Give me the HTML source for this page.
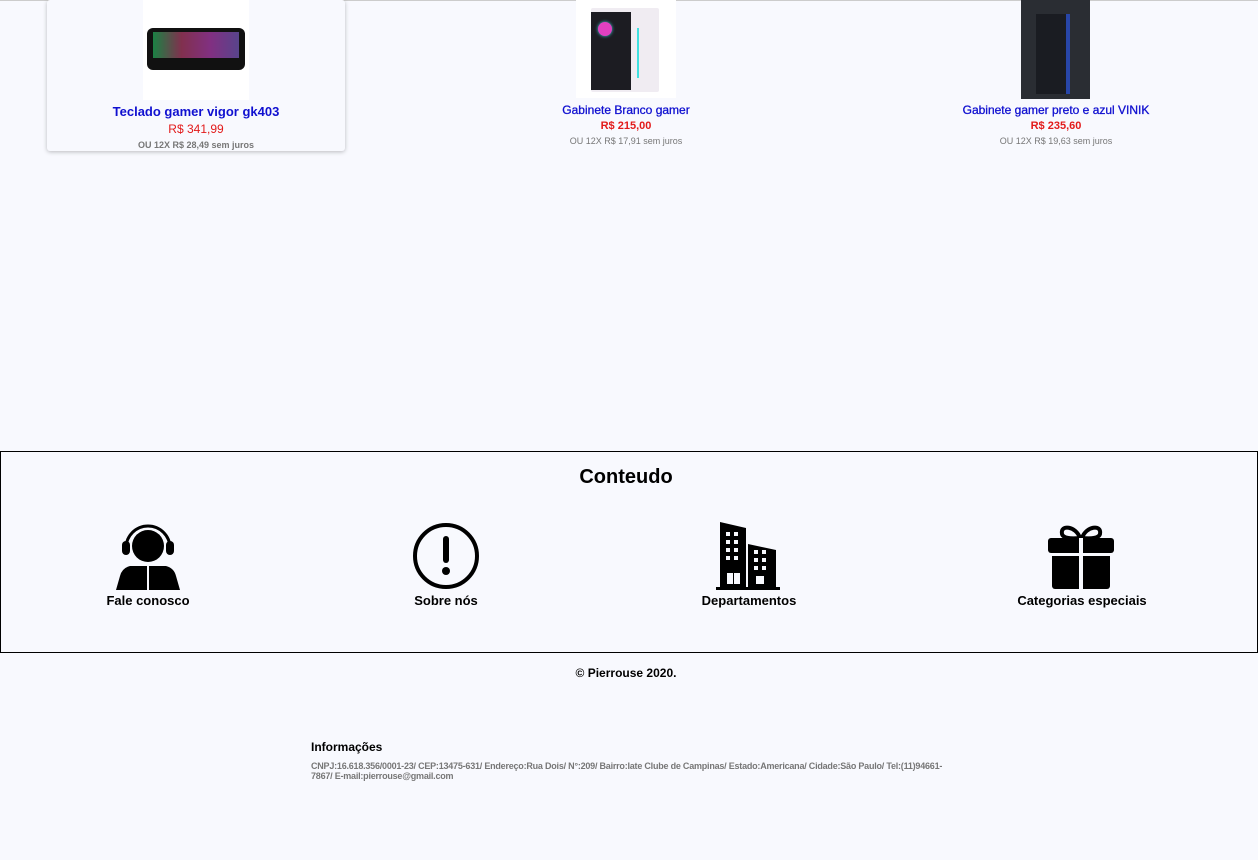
<!DOCTYPE html>
<html><head><meta charset="utf-8"><style>
body{margin:0;background:#f8f9fe;font-family:"Liberation Sans",Arial,sans-serif;width:1258px;height:860px;position:relative;overflow:hidden}
.abs{position:absolute}
.t{color:#1010d0;font-weight:bold;text-align:center;white-space:nowrap}
.p{color:#e21a1a;font-weight:bold;text-align:center}
.s{color:#777;font-weight:bold;text-align:center;font-size:9px;white-space:nowrap}
.lbl{position:absolute;top:593px;font-size:13px;font-weight:bold;width:240px;text-align:center}
</style></head><body>
<div class="abs" style="left:0;top:0;width:1258px;height:1px;background:#ccc"></div>
<div class="abs" style="left:47px;top:0;width:298px;height:151px;background:#f8f9fe;box-shadow:0 1px 4px rgba(0,0,0,.25);border-radius:3px"></div>
<div class="abs" style="left:143px;top:0;width:106px;height:100px;background:#fff">
<div class="abs" style="left:4px;top:28px;width:98px;height:42px;background:#111;border-radius:6px"></div>
<div class="abs" style="left:10px;top:32px;width:86px;height:26px;background:linear-gradient(90deg,#2c6,#c47,#c4c,#86d);opacity:.6"></div>
</div>
<div class="abs t" style="left:47px;width:298px;top:104px;font-size:13px">Teclado gamer vigor gk403</div>
<div class="abs p" style="left:47px;width:298px;top:122px;font-size:12px;font-weight:normal">R$ 341,99</div>
<div class="abs s" style="left:47px;width:298px;top:140px">OU 12X R$ 28,49 sem juros</div>

<div class="abs" style="left:576px;top:0;width:100px;height:98px;background:#fff">
<div class="abs" style="left:15px;top:8px;width:68px;height:84px;background:#f0ecf2;border-radius:2px"></div>
<div class="abs" style="left:15px;top:12px;width:40px;height:78px;background:#1c1c22"></div>
<div class="abs" style="left:22px;top:22px;width:14px;height:14px;border-radius:50%;background:#e040c0;box-shadow:0 0 3px #40d0e0"></div>
<div class="abs" style="left:61px;top:28px;width:2px;height:50px;background:#40e0e0"></div>
</div>
<div class="abs t" style="left:476px;width:300px;top:103px;font-size:12px;font-weight:normal;-webkit-text-stroke:.3px #1010d0">Gabinete Branco gamer</div>
<div class="abs p" style="left:476px;width:300px;top:120px;font-size:11px">R$ 215,00</div>
<div class="abs s" style="left:476px;width:300px;top:136px;font-weight:normal">OU 12X R$ 17,91 sem juros</div>

<div class="abs" style="left:1021px;top:0;width:69px;height:99px;background:#2a2d33">
<div class="abs" style="left:15px;top:14px;width:30px;height:80px;background:#1a1c22;border-right:4px solid #2846a8"></div>
</div>
<div class="abs t" style="left:906px;width:300px;top:103px;font-size:12px;font-weight:normal;-webkit-text-stroke:.3px #1010d0">Gabinete gamer preto e azul VINIK</div>
<div class="abs p" style="left:906px;width:300px;top:120px;font-size:11px">R$ 235,60</div>
<div class="abs s" style="left:906px;width:300px;top:136px;font-weight:normal">OU 12X R$ 19,63 sem juros</div>

<div class="abs" style="left:0;top:451px;width:1256px;height:200px;border:1px solid #000"></div>
<div class="abs" style="left:476px;width:300px;top:466px;font-size:20px;font-weight:bold;text-align:center">Conteudo</div>

<svg class="abs" style="left:114px;top:522px" width="68" height="68" viewBox="0 0 68 68">
<circle cx="34" cy="24" r="16" fill="#000"/>
<path d="M12 26a22 22 0 0 1 44 0" fill="none" stroke="#000" stroke-width="3"/>
<rect x="8" y="19" width="8" height="14" rx="4"/><rect x="52" y="19" width="8" height="14" rx="4"/>
<path d="M15 33q2 8 16 8" fill="none" stroke="#f8f9fe" stroke-width="2"/>
<path d="M16 44h36q8 2 10 10l4 14H2l4-14q2-8 10-10z" fill="#000"/>
<line x1="34" y1="44" x2="34" y2="68" stroke="#f8f9fe" stroke-width="2"/>
</svg>
<svg class="abs" style="left:412px;top:522px" width="68" height="68" viewBox="0 0 68 68">
<circle cx="34" cy="34" r="31" fill="none" stroke="#000" stroke-width="4"/>
<rect x="31" y="14" width="6" height="27" rx="3"/><circle cx="34" cy="49" r="4"/>
</svg>
<svg class="abs" style="left:716px;top:522px" width="64" height="68" viewBox="0 0 64 68">
<path d="M4 0l26 6v62H4z M32 22l28 6v40H32z"/>
<rect x="0" y="65" width="64" height="3"/>
<g fill="#f8f9fe">
<rect x="10" y="10" width="4" height="4"/><rect x="18" y="10" width="4" height="4"/>
<rect x="10" y="18" width="4" height="4"/><rect x="18" y="18" width="4" height="4"/>
<rect x="10" y="26" width="4" height="4"/><rect x="18" y="26" width="4" height="4"/>
<rect x="10" y="34" width="4" height="4"/><rect x="18" y="34" width="4" height="4"/>
<rect x="38" y="28" width="4" height="4"/><rect x="46" y="28" width="4" height="4"/>
<rect x="38" y="36" width="4" height="4"/><rect x="46" y="36" width="4" height="4"/>
<rect x="38" y="44" width="4" height="4"/><rect x="46" y="44" width="4" height="4"/>
<rect x="11" y="51" width="6" height="11"/><rect x="18" y="51" width="6" height="11"/>
<rect x="40" y="54" width="8" height="8"/>
</g></svg>
<svg class="abs" style="left:1047px;top:522px" width="68" height="68" viewBox="0 0 68 68">
<path d="M33 16c-4-12-20-14-18-4 1 4 8 5 18 4zM35 16c4-12 20-14 18-4-1 4-8 5-18 4z" fill="none" stroke="#000" stroke-width="4"/>
<rect x="1" y="16" width="66" height="15" rx="3"/>
<path d="M5 34h58v30a3 3 0 0 1-3 3H8a3 3 0 0 1-3-3z"/>
<rect x="32" y="16" width="4" height="52" fill="#f8f9fe"/>
</svg>
<div class="lbl" style="left:28px">Fale conosco</div>
<div class="lbl" style="left:326px">Sobre nós</div>
<div class="lbl" style="left:629px">Departamentos</div>
<div class="lbl" style="left:962px">Categorias especiais</div>

<div class="abs" style="left:476px;width:300px;top:666px;font-size:12px;font-weight:bold;text-align:center">© Pierrouse 2020.</div>
<div class="abs" style="left:311px;top:740px;font-size:12px;font-weight:bold">Informações</div>
<div class="abs" style="left:311px;top:761px;width:640px;font-size:9px;line-height:10px;color:#777;font-weight:bold;letter-spacing:-0.22px">CNPJ:16.618.356/0001-23/ CEP:13475-631/ Endereço:Rua Dois/ N°:209/ Bairro:Iate Clube de Campinas/ Estado:Americana/ Cidade:São Paulo/ Tel:(11)94661-7867/ E-mail:pierrouse@gmail.com</div>
</body></html>
